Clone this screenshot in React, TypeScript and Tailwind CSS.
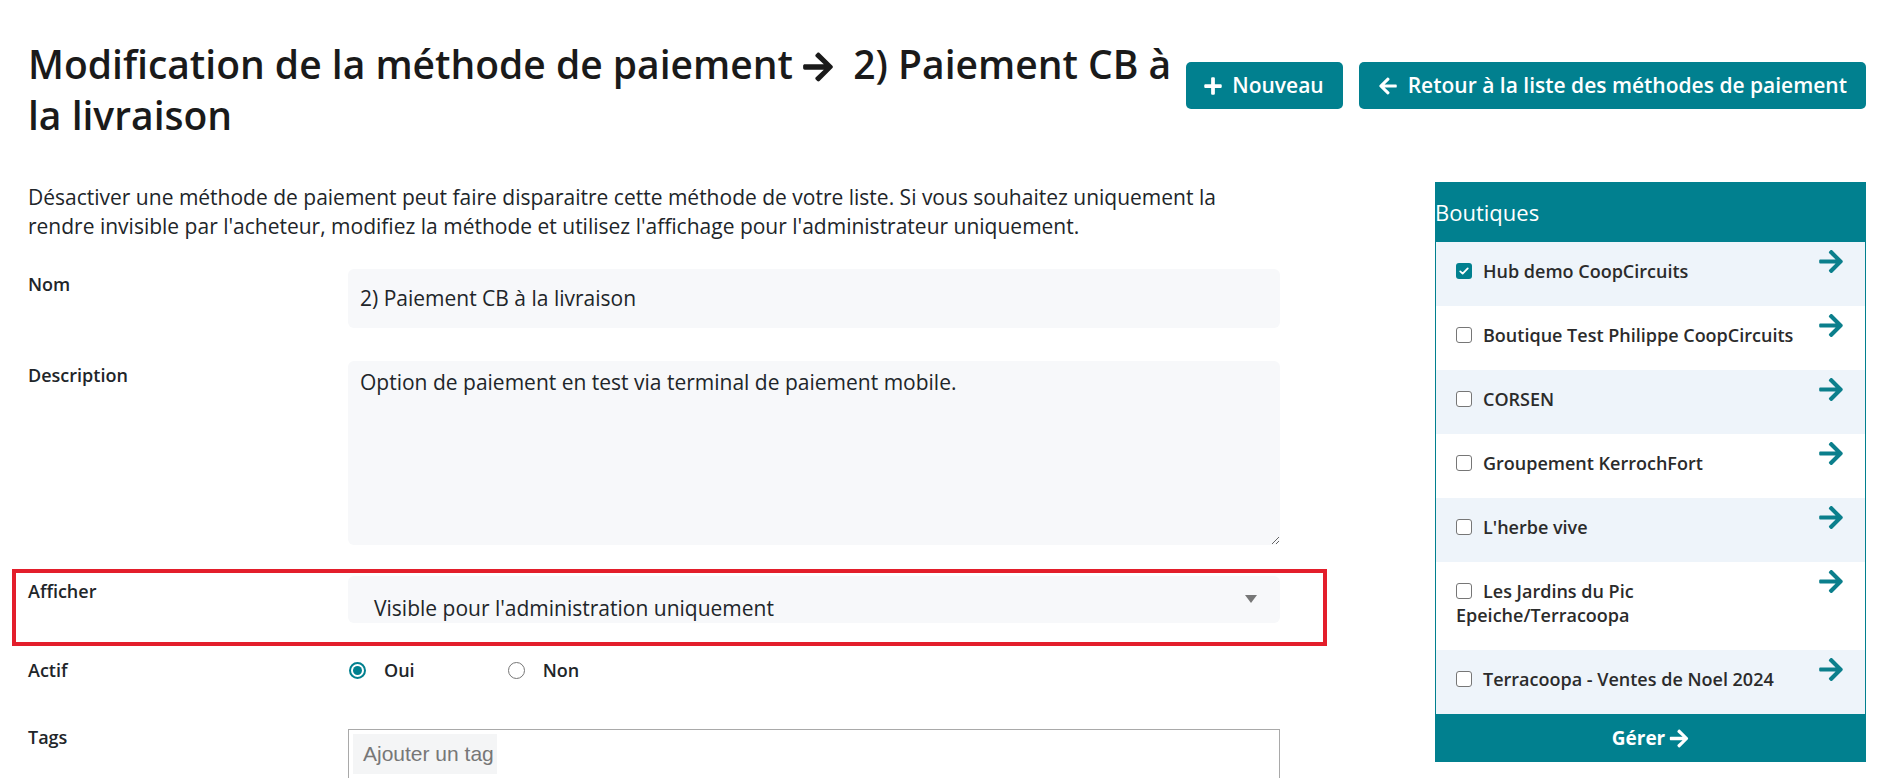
import { FaArrowLeft, FaArrowRight, FaPlus } from "react-icons/fa";

const shops = [
  { name: "Hub demo CoopCircuits", checked: true },
  { name: "Boutique Test Philippe CoopCircuits", checked: false },
  { name: "CORSEN", checked: false },
  { name: "Groupement KerrochFort", checked: false },
  { name: "L'herbe vive", checked: false },
  { name: "Les Jardins du Pic Epeiche/Terracoopa", checked: false },
  { name: "Terracoopa - Ventes de Noel 2024", checked: false },
];

function Checkbox({ checked }: { checked: boolean }) {
  if (checked) {
    return (
      <span className="inline-flex items-center justify-center w-[16px] h-[16px] rounded-[3px] bg-[#01808f] align-middle relative -top-[2px] mr-[11px]">
        <svg viewBox="0 0 16 16" className="w-[12px] h-[12px]" fill="none">
          <path d="M3 8.5l3.2 3L13 4.5" stroke="white" strokeWidth="2.4" strokeLinecap="round" strokeLinejoin="round" />
        </svg>
      </span>
    );
  }
  return (
    <span className="inline-block w-[16px] h-[16px] rounded-[3px] border-[1.5px] border-[#767676] bg-white align-middle relative -top-[2px] mr-[11px]" />
  );
}

function Radio({ checked, label }: { checked: boolean; label: string }) {
  return (
    <label className="flex items-center">
      {checked ? (
        <span className="w-[17px] h-[17px] rounded-full border-[2px] border-[#01808f] flex items-center justify-center">
          <span className="w-[9px] h-[9px] rounded-full bg-[#01808f]" />
        </span>
      ) : (
        <span className="w-[17px] h-[17px] rounded-full border border-[#767676] bg-white" />
      )}
      <span className="ml-[18px] text-[18px] font-semibold text-[#212529]">{label}</span>
    </label>
  );
}

function App() {
  return (
    <div className="min-h-screen bg-white text-[#212529] font-['Open_Sans',sans-serif]">
      <div className="px-[28px] pt-[38px]">
        {/* header */}
        <div className="flex items-start gap-[8px]">
          <h1 className="flex-1 text-[39px] leading-[51px] font-semibold text-[#1a1a1a]">
            Modification de la méthode de paiement{" "}
            <FaArrowRight className="inline-block w-[30px] h-[34px] align-[-5px] mr-[10px]" /> 2) Paiement CB à la livraison
          </h1>
          <div className="flex gap-[16px] mt-[24px] shrink-0">
            <button className="h-[47px] flex items-center gap-[10px] pl-[18px] pr-[19px] rounded-[5px] bg-[#01808f] text-white text-[21px] font-semibold">
              <FaPlus className="w-[18px] h-[20px]" />
              Nouveau
            </button>
            <button className="h-[47px] flex items-center gap-[11px] pl-[20px] pr-[19px] rounded-[5px] bg-[#01808f] text-white text-[21px] font-semibold">
              <FaArrowLeft className="w-[18px] h-[20px]" />
              Retour à la liste des méthodes de paiement
            </button>
          </div>
        </div>

        <div className="flex justify-between mt-[42px]">
          {/* form */}
          <div className="w-[1252px]">
            <p className="text-[21px] leading-[29px] mt-[1px]">
              Désactiver une méthode de paiement peut faire disparaitre cette méthode de votre liste. Si vous souhaitez uniquement la rendre invisible par l'acheteur, modifiez la méthode et utilisez l'affichage pour l'administrateur uniquement.
            </p>

            <div className="flex items-start mt-[28px]">
              <div className="w-[320px] pt-[3px] text-[18px] leading-[25px] font-semibold">Nom</div>
              <div className="flex-1 h-[59px] rounded-[6px] bg-[#f7f8fa] flex items-center px-[12px] text-[21px]">
                2) Paiement CB à la livraison
              </div>
            </div>

            <div className="flex items-start mt-[33px]">
              <div className="w-[320px] pt-[2px] text-[18px] leading-[25px] font-semibold">Description</div>
              <textarea
                readOnly
                defaultValue="Option de paiement en test via terminal de paiement mobile."
                className="flex-1 h-[184px] rounded-[6px] bg-[#f7f8fa] px-[12px] py-[7px] text-[21px] leading-[28px] outline-none resize-y"
              />
            </div>

            <div className="mt-[24px] -ml-[16px] w-[1315px] border-4 border-[#e31e2b] pl-[12px] pt-[3px] pb-[19px]">
              <div className="flex items-start">
                <div className="w-[320px] pt-[3px] text-[18px] leading-[25px] font-semibold">Afficher</div>
                <div className="w-[932px] h-[47px] rounded-[6px] bg-[#f7f8fa] flex justify-between pl-[26px] pr-[23px]">
                  <span className="pt-[18px] text-[21px] leading-[28px]">Visible pour l'administration uniquement</span>
                  <span className="mt-[19px] w-0 h-0 border-l-[6px] border-r-[6px] border-t-[8px] border-l-transparent border-r-transparent border-t-[#777]" />
                </div>
              </div>
            </div>

            <div className="flex items-center mt-[12px] h-[25px]">
              <div className="w-[320px] text-[18px] leading-[25px] font-semibold">Actif</div>
              <div className="flex items-center gap-[93px] pl-[1px]">
                <Radio checked label="Oui" />
                <Radio checked={false} label="Non" />
              </div>
            </div>

            <div className="flex items-start mt-[46px]">
              <div className="w-[320px] -mt-[4px] text-[18px] leading-[25px] font-semibold">Tags</div>
              <div className="flex-1 h-[80px] border border-[#a9a9a9] p-[4px]">
                <span className="inline-flex items-center h-[40px] pl-[10px] pr-[3px] bg-[#f4f5f6] text-[21px] text-[#777] font-['Liberation_Sans',sans-serif]">
                  Ajouter un tag
                </span>
              </div>
            </div>
          </div>

          {/* shops panel */}
          <aside className="w-[431px] self-start">
            <div className="h-[60px] bg-[#01808f] flex items-center text-white text-[22px]">Boutiques</div>
            <div className="border-x border-[#01808f]">
              {shops.map((s, i) => (
                <div key={s.name} className={`flex pl-[20px] pr-[22px] ${i % 2 === 0 ? "bg-[#eef4fa]" : "bg-white"}`}>
                  <div className="flex-1 pt-[17px] pb-[23px] text-[18px] leading-[24px] font-semibold text-[#2b2b2b]">
                    <Checkbox checked={s.checked} />
                    {s.name}
                  </div>
                  <FaArrowRight className="shrink-0 mt-[6px] ml-[16px] w-[24px] h-[27px] text-[#0b7f8c]" />
                </div>
              ))}
            </div>
            <div className="h-[48px] bg-[#01808f] flex items-center justify-center gap-[4px] text-white text-[19px] font-bold">
              Gérer
              <FaArrowRight className="w-[20px] h-[21px]" />
            </div>
          </aside>
        </div>
      </div>
    </div>
  );
}

export default App;
